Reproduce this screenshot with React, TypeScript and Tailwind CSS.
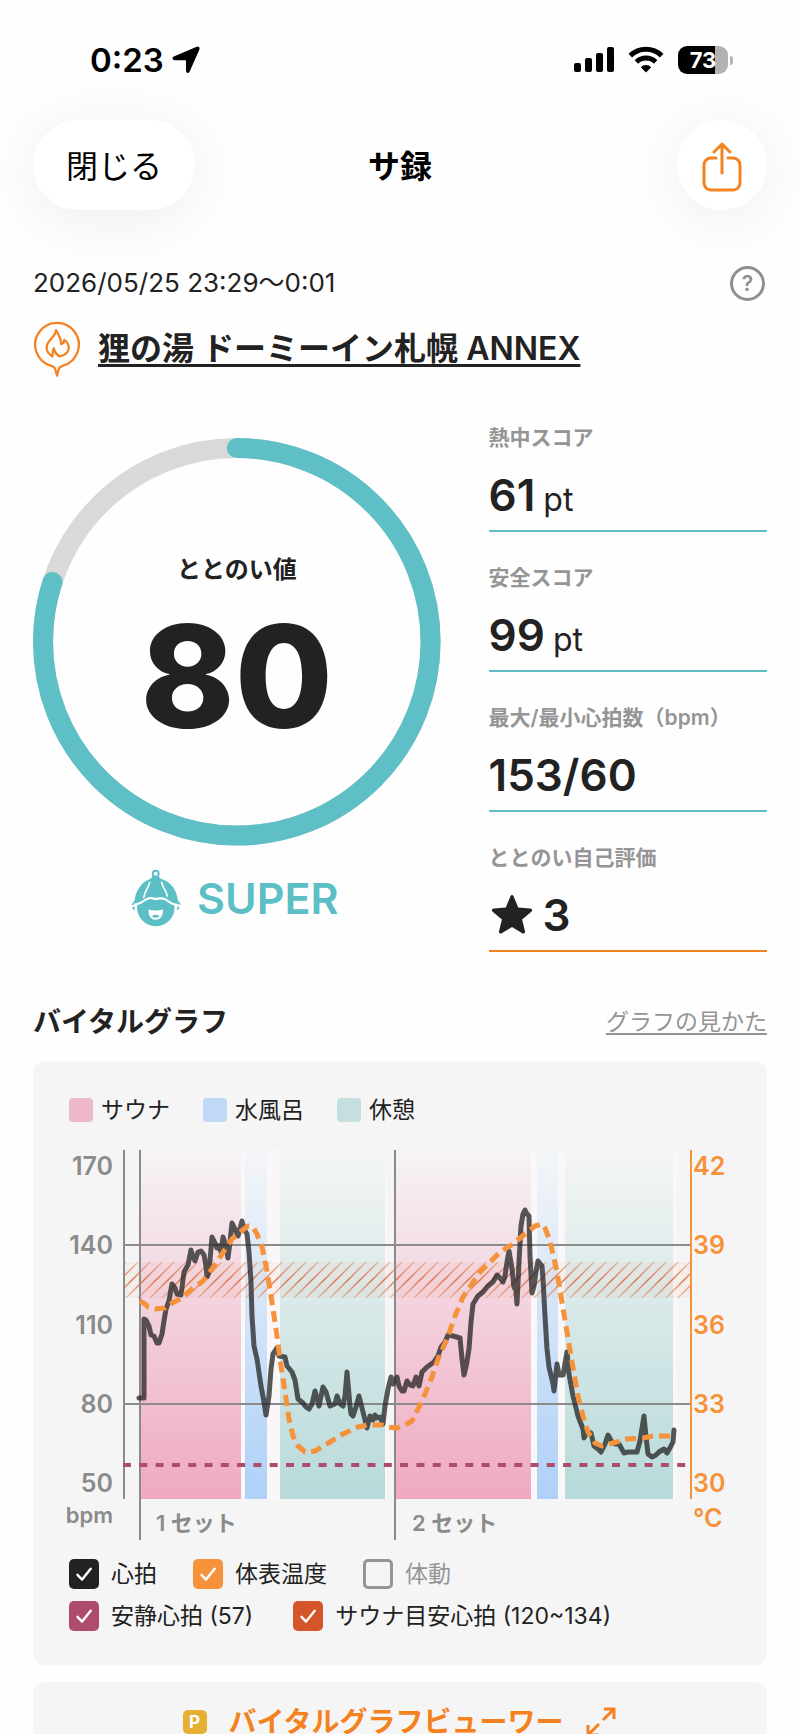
import React, { useState } from 'react';

interface StatProps {
  label: string;
  accent?: string;
  children: React.ReactNode;
}

interface SeriesToggleProps {
  label: string;
  checked: boolean;
  color: string;
  onChange: () => void;
}

const PHASES = [
  { label: 'サウナ', swatch: 'bg-[#efb9cd]' },
  { label: '水風呂', swatch: 'bg-[#bfd9f6]' },
  { label: '休憩', swatch: 'bg-[#c5dfdf]' },
];

const BANDS = [
  { x: 72, width: 100, fill: 'url(#sauna)' },
  { x: 176, width: 22, fill: 'url(#water)' },
  { x: 211, width: 105, fill: 'url(#rest)' },
  { x: 327, width: 135, fill: 'url(#sauna)' },
  { x: 468, width: 21, fill: 'url(#water)' },
  { x: 496, width: 108, fill: 'url(#rest)' },
];

const AXIS = [
  { y: 30, bpm: 170, temp: 42 },
  { y: 109, bpm: 140, temp: 39 },
  { y: 189, bpm: 110, temp: 36 },
  { y: 268, bpm: 80, temp: 33 },
  { y: 347, bpm: 50, temp: 30 },
];

const HEART_RATE =
  '70,253 75,253 75,174 77,175 80,181 82,190 85,191 88,198 90,198 93,189 95,176 97,164 100,156 103,139 106,143 108,149 112,150 115,127 119,120 122,105 124,112 126,116 129,107 132,106 135,110 137,121 138,132 140,127 142,104 143,92 146,98 148,103 150,101 152,107 154,92 157,101 159,113 161,97 163,78 166,84 169,91 171,84 173,76 175,84 178,89 180,107 182,137 183,171 185,201 188,214 192,241 195,257 197,270 200,251 202,224 204,209 208,203 210,211 216,212 218,221 223,227 226,235 229,254 234,258 237,262 240,264 243,259 246,246 250,261 254,242 257,247 261,261 266,259 268,251 271,259 274,261 276,251 278,227 281,261 282,269 284,271 287,262 290,251 294,267 298,283 301,271 304,275 306,270 308,273 311,272 314,279 316,261 319,244 322,232 324,239 328,232 330,241 333,246 335,246 338,236 341,240 344,241 347,232 350,241 353,227 358,222 365,217 369,211 372,202 376,197 379,190 384,191 391,193 393,214 395,230 397,222 400,204 402,177 404,159 409,151 414,147 419,141 424,137 428,130 431,133 434,137 436,131 438,117 440,106 443,124 445,142 447,146 448,159 450,117 452,81 454,69 456,65 458,69 460,71 461,111 463,148 465,141 467,126 469,116 473,121 474,134 476,171 478,204 480,222 484,239 485,246 488,219 490,230 494,230 498,207 500,229 504,251 509,271 514,284 515,293 518,287 522,288 525,301 529,304 532,307 536,299 539,290 543,297 546,299 550,299 555,308 559,307 568,307 571,296 575,271 577,292 579,309 583,312 587,310 590,307 595,304 598,308 602,301 604,297 605,285';

const SKIN_TEMP =
  '71,156 76,159 79,162 86,164 96,163 103,158 111,154 123,144 134,136 143,124 153,109 163,94 171,87 179,81 184,82 188,89 193,102 198,126 203,157 208,191 211,214 216,247 220,274 224,291 229,301 236,307 246,306 261,297 274,289 289,282 299,280 313,280 318,282 328,283 336,280 343,276 349,264 356,249 363,232 369,214 378,194 386,171 394,152 403,139 411,127 421,117 431,107 444,99 456,89 466,81 473,79 476,83 481,96 488,127 493,157 498,187 503,217 509,251 514,271 519,287 526,298 533,301 544,298 558,294 574,293 584,291 604,291';

const StatusBar = () => (
  <div className="flex h-[120px] items-center justify-between pr-[67px] pl-[90px] text-black">
    <div className="flex items-center gap-2">
      <span className="text-[33px] leading-10 font-semibold">0:23</span>
      <svg className="h-7 w-7" viewBox="0 0 28 28" fill="currentColor" stroke="currentColor" strokeWidth="1.5" strokeLinejoin="round" aria-hidden="true">
        <path d="M25 1.500c1.200-.6 2.200.4 1.700 1.600L17 25.300c-.6 1.400-2.200 1.100-2.200-.5v-10.100c0-.8-.4-1.200-1.200-1.200H2.700c-1.600 0-2-1.600-.6-2.300z" />
      </svg>
    </div>
    <div className="flex items-center gap-[14px]">
      <svg className="h-7 w-10" viewBox="0 0 40 28" fill="currentColor" aria-hidden="true">
        <rect x="0" y="17" width="7" height="9" rx="2" />
        <rect x="11" y="12" width="7" height="14" rx="2" />
        <rect x="22" y="7" width="7" height="19" rx="2" />
        <rect x="33" y="1" width="7" height="25" rx="2" />
      </svg>
      <svg className="h-7 w-9" viewBox="0 0 36 28" fill="none" aria-hidden="true">
        <path d="M2.3 9.6a22.5 22.5 0 0 1 31.4 0" stroke="currentColor" strokeWidth="5" />
        <path d="M8.4 16a13.7 13.7 0 0 1 19.2 0" stroke="currentColor" strokeWidth="5" />
        <path d="M18 26.4l-5.2-5.2a7.5 7.5 0 0 1 10.4 0z" fill="currentColor" />
      </svg>
      <div className="flex items-center gap-[2px]">
        <div className="flex h-7 w-[50px] items-center justify-center rounded-[9px] bg-linear-to-r from-black from-74% to-[#b2b2b2] to-74%">
          <span className="text-[22px] leading-7 font-bold text-white">73</span>
        </div>
        <div className="h-[9px] w-[3px] rounded-r-full bg-[#b2b2b2]" />
      </div>
    </div>
  </div>
);

const FacilityPin = () => (
  <svg
    className="h-14 w-12 shrink-0"
    viewBox="38 26 146 172"
    fill="none"
    stroke="#f58220"
    strokeWidth="7"
    strokeLinejoin="round"
    strokeLinecap="round"
    aria-hidden="true"
  >
    <path d="M92 163a67 67 0 1 1 38 0c-7 2-11 4-13 9l-6 22-6-22c-2-5-6-7-13-9z" />
    <path d="M108 54c-1 22-28 30-29 53 0 13 7 22 18 28 0-9 0-17 4-25 3 12 9 20 18 25 17-3 29-14 28-29-1-10-6-17-14-22 1 6-3 11-9 13 0-18-7-25-16-43z" />
  </svg>
);

const Mascot = () => (
  <svg className="h-[58px] w-[50px]" viewBox="35 25 152 174" aria-hidden="true">
    <circle cx="110" cy="38" r="9" fill="none" stroke="#5cbfc6" strokeWidth="6" />
    <path d="M100 46h20c2 6 5 8 12 10 25 9 42 32 45 62l10 14c-24 0-32-5-44-14-12-8-25-5-34-5s-22-3-34 5c-12 9-18 15-39 15l10-14c3-28 20-53 43-63 6-3 9-4 11-10z" fill="#5cbfc6" />
    <path d="M54 133c13-3 20-10 29-15 15-7 22 1 27 1s14-8 30 0c10 5 15 11 27 15a57 57 0 1 1-113-1z" fill="#5cbfc6" />
    <path d="M92 64c-3 18-15 24-18 46M128 64c3 18 15 24 17 42" fill="none" stroke="#fff" strokeWidth="5" strokeLinecap="round" />
    <path d="M44 132c15-1 22-5 37-16 15-8 23-2 29-2s16-5 30 2c15 11 20 16 37 17" fill="none" stroke="#fff" strokeWidth="6" />
    <path d="M88 147c14 4 29 4 44 0 1 18-6 31-22 31s-22-13-22-31z" fill="#fff" />
    <path d="M99 169c2-8 20-8 22 0-7 4-15 4-22 0z" fill="#5cbfc6" />
    <path d="M42 140l2 6M179 140l-2 6" stroke="#5cbfc6" strokeWidth="5" strokeLinecap="round" />
  </svg>
);

const ScoreRing = ({ score }: { score: number }) => (
  <div className="relative">
    <svg className="block w-full" viewBox="0 0 407 407" fill="none" strokeWidth="20">
      <circle cx="203.5" cy="203.5" r="193.5" stroke="#d9d9d9" />
      <circle
        cx="203.5"
        cy="203.5"
        r="193.5"
        stroke="#5ebfc6"
        strokeLinecap="round"
        pathLength="100"
        strokeDasharray={`${score} 100`}
        transform="rotate(-90 203.5 203.5)"
      />
    </svg>
    <div className="absolute inset-0 flex flex-col items-center pt-[114px]">
      <p className="text-2xl leading-9 font-semibold">ととのい値</p>
      <p className="mt-2 text-[142px] leading-[160px] font-extrabold">{score}</p>
    </div>
  </div>
);

const Stat = ({ label, accent = 'border-[#5ebfc6]', children }: StatProps) => (
  <div className={`border-b-2 ${accent}`}>
    <dt className="text-[21px] leading-7 font-semibold text-[#959595]">{label}</dt>
    <dd className="mt-2 flex h-[70px] items-baseline gap-2 text-[44px] leading-[70px] font-semibold">{children}</dd>
  </div>
);

const VitalChart = ({ visible }: { visible: Record<string, boolean> }) => (
  <svg className="mt-[22px] block w-full overflow-visible" viewBox="0 0 662 400" role="img" aria-label="バイタルグラフ">
    <defs>
      <linearGradient id="sauna" x1="0" y1="0" x2="0" y2="1">
        <stop offset="0" stopColor="#f6f4f5" />
        <stop offset="1" stopColor="#efa9c1" />
      </linearGradient>
      <linearGradient id="water" x1="0" y1="0" x2="0" y2="1">
        <stop offset="0" stopColor="#f4f6f8" />
        <stop offset="1" stopColor="#aed0f8" />
      </linearGradient>
      <linearGradient id="rest" x1="0" y1="0" x2="0" y2="1">
        <stop offset="0" stopColor="#f4f5f5" />
        <stop offset="1" stopColor="#b8dada" />
      </linearGradient>
      <linearGradient id="hatch" gradientUnits="userSpaceOnUse" x1="0" y1="117" x2="0" y2="153">
        <stop offset="0" stopColor="#e0805c" stopOpacity="0.4" />
        <stop offset="0.5" stopColor="#dd6a40" stopOpacity="0.9" />
        <stop offset="1" stopColor="#e0805c" stopOpacity="0.4" />
      </linearGradient>
      <clipPath id="target">
        <rect x="55" y="117" width="567" height="36" />
      </clipPath>
    </defs>

    <rect x="72" y="5" width="246" height="349" fill="#f9f7f7" />
    <rect x="327" y="5" width="281" height="349" fill="#f9f7f7" />
    {BANDS.map((band) => (
      <rect key={band.x} x={band.x} y="5" width={band.width} height="349" fill={band.fill} />
    ))}

    {visible.target && (
      <g clipPath="url(#target)">
        <rect x="55" y="117" width="567" height="36" fill="#e8703a" fillOpacity="0.05" />
        {Array.from({ length: 52 }, (_, i) => (
          <line key={i} x1={20 + i * 12} y1="154" x2={58 + i * 12} y2="116" stroke="url(#hatch)" strokeWidth="1.5" />
        ))}
      </g>
    )}

    <g stroke="#8b8b8b" strokeWidth="2">
      <path d="M55 100H622M55 259H622" />
      <path d="M55 5V354M71 5V395M326 5V395" />
    </g>
    <path d="M622 5V354" stroke="#f5923a" strokeWidth="2" />

    {visible.resting && (
      <path d="M54 320H618" stroke="#ad4d6b" strokeWidth="4" strokeDasharray="8 8.300" />
    )}
    {visible.heart && (
      <polyline
        points={HEART_RATE}
        fill="none"
        stroke="#222"
        strokeOpacity="0.75"
        strokeWidth="5"
        strokeLinejoin="round"
        strokeLinecap="round"
      />
    )}
    {visible.temp && (
      <polyline
        points={SKIN_TEMP}
        fill="none"
        stroke="#f5923a"
        strokeWidth="5"
        strokeLinejoin="round"
        strokeDasharray="11 6"
      />
    )}

    {AXIS.map((tick) => (
      <g key={tick.bpm} className="text-[25px] font-semibold">
        <text x="44" y={tick.y} textAnchor="end" fill="#8b8b8b">{tick.bpm}</text>
        <text x="624" y={tick.y} fill="#f5923a">{tick.temp}</text>
      </g>
    ))}
    <g className="text-[22px] font-semibold" fill="#8b8b8b">
      <text x="44" y="378" textAnchor="end">bpm</text>
      <text x="87" y="386">1 セット</text>
      <text x="343" y="386">2 セット</text>
    </g>
    <text className="text-[25px] font-semibold" x="624" y="382" fill="#f5923a">°C</text>
  </svg>
);

const SeriesToggle = ({ label, checked, color, onChange }: SeriesToggleProps) => (
  <label className={`flex items-center gap-3 text-[23px] leading-[30px] ${checked ? '' : 'text-[#959595]'}`}>
    <span className="relative h-[30px] w-[30px]">
      <input
        type="checkbox"
        checked={checked}
        onChange={onChange}
        className={`block h-[30px] w-[30px] appearance-none rounded-[5px] border-[#959595] ${checked ? color : 'border-3'}`}
      />
      {checked && (
        <svg className="pointer-events-none absolute inset-0" viewBox="0 0 30 30" fill="none" stroke="#fff" strokeWidth="2.400" strokeLinecap="round" strokeLinejoin="round">
          <path d="M8.500 15.800l4.600 4.800 8.600-10.800" />
        </svg>
      )}
    </span>
    {label}
  </label>
);

export default function App() {
  const [visible, setVisible] = useState<Record<string, boolean>>({
    heart: true,
    temp: true,
    motion: false,
    resting: true,
    target: true,
  });

  const toggle = (key: string) => setVisible((prev) => ({ ...prev, [key]: !prev[key] }));

  return (
    <div className="h-screen overflow-y-auto bg-[#fefefe] font-['Inter','Noto_Sans_CJK_JP',sans-serif] text-[#222] [scrollbar-width:none]">
      <StatusBar />

      {/* Navigation */}
      <header className="grid grid-cols-3 items-center px-[33px] text-black">
        <button className="h-[90px] w-[162px] rounded-full bg-white pt-1 text-[32px] shadow-[0_8px_64px_rgba(0,0,0,0.07)]">
          閉じる
        </button>
        <h1 className="pt-1 text-center text-[32px] leading-10 font-semibold">サ録</h1>
        <button
          aria-label="共有"
          className="flex h-[90px] w-[90px] items-center justify-center justify-self-end rounded-full bg-white shadow-[0_8px_64px_rgba(0,0,0,0.07)]"
        >
          <svg className="mt-1 h-[50px] w-10" viewBox="0 0 40 50" fill="none" stroke="#f58220" strokeWidth="3" strokeLinecap="round" strokeLinejoin="round">
            <path d="M14 16H9a7 7 0 0 0-7 7v18a7 7 0 0 0 7 7h22a7 7 0 0 0 7-7V23a7 7 0 0 0-7-7h-5" />
            <path d="M20 31V2M12 10l8-8 8 8" />
          </svg>
        </button>
      </header>

      <main className="px-[33px] pt-[55px]">
        <div className="flex h-9 items-center justify-between pr-[2px]">
          <p className="text-[26px] leading-9">2026/05/25 23:29〜0:01</p>
          <button
            aria-label="ヘルプ"
            className="flex h-[35px] w-[35px] items-center justify-center rounded-full border-3 border-[#8f8f8f] text-[21px] leading-none font-semibold text-[#8f8f8f]"
          >
            ?
          </button>
        </div>

        <div className="mt-5 flex items-center gap-[17px]">
          <FacilityPin />
          <a href="#facility" className="text-[32px] leading-[56px] font-semibold underline decoration-3 underline-offset-4">
            狸の湯 ドーミーイン札幌 ANNEX
          </a>
        </div>

        <section className="mt-[47px] grid grid-cols-[407fr_278fr] gap-12">
          <div className="pt-[14px]">
            <ScoreRing score={80} />
            <div className="mt-[23px] flex items-center justify-center gap-4 pr-1 text-[#5cbfc6]">
              <Mascot />
              <span className="text-[43px] leading-[58px] font-semibold">SUPER</span>
            </div>
          </div>

          <dl className="flex flex-col gap-8">
            <Stat label="熱中スコア">
              61 <span className="text-[32px] leading-none font-normal">pt</span>
            </Stat>
            <Stat label="安全スコア">
              99 <span className="text-[32px] leading-none font-normal">pt</span>
            </Stat>
            <Stat label="最大/最小心拍数（bpm）">153/60</Stat>
            <Stat label="ととのい自己評価" accent="border-[#f58220]">
              <svg className="h-[42px] w-[46px] self-center" viewBox="0 0 46 42" fill="#222" aria-hidden="true">
                <path d="M21.400 2.300c.7-1.700 2.500-1.700 3.200 0l4.600 11.200 12.100.9c1.800.2 2.400 2.100 1 3.300l-9.200 7.900 2.900 11.700c.4 1.800-1.200 2.900-2.700 2L23 33l-10.300 6.300c-1.500.9-3.100-.2-2.700-2l2.900-11.700-9.200-7.900c-1.400-1.200-.8-3.100 1-3.300l12.100-.9z" />
              </svg>
              3
            </Stat>
          </dl>
        </section>

        <div className="mt-12 flex h-11 items-center justify-between">
          <h2 className="text-[28px] leading-11 font-bold">バイタルグラフ</h2>
          <a href="#guide" className="text-[23px] leading-9 text-[#959595] underline underline-offset-3">
            グラフの見かた
          </a>
        </div>

        <section className="mt-[17px] rounded-xl bg-[#f5f5f5] px-9 pt-9 pb-[34px]">
          <ul className="flex gap-[33px]">
            {PHASES.map((phase) => (
              <li key={phase.label} className="flex items-center gap-2 text-[23px] leading-[26px]">
                <span className={`h-6 w-6 rounded-[4px] ${phase.swatch}`} />
                {phase.label}
              </li>
            ))}
          </ul>

          <VitalChart visible={visible} />

          <div className="mt-[14px] flex flex-col gap-3">
            <div className="flex gap-9">
              <SeriesToggle label="心拍" checked={visible.heart} color="bg-[#222]" onChange={() => toggle('heart')} />
              <SeriesToggle label="体表温度" checked={visible.temp} color="bg-[#f5923a]" onChange={() => toggle('temp')} />
              <SeriesToggle label="体動" checked={visible.motion} color="bg-[#8b8b8b]" onChange={() => toggle('motion')} />
            </div>
            <div className="flex gap-10">
              <SeriesToggle label="安静心拍 (57)" checked={visible.resting} color="bg-[#ad4d6b]" onChange={() => toggle('resting')} />
              <SeriesToggle label="サウナ目安心拍 (120~134)" checked={visible.target} color="bg-[#d4552a]" onChange={() => toggle('target')} />
            </div>
          </div>
        </section>

        <button className="mt-[17px] flex h-20 w-full items-center justify-center gap-[22px] rounded-xl bg-[#f5f5f5] text-[28px] leading-6 font-bold text-[#f58220]">
          <span className="h-6 w-6 rounded-[5px] bg-[#e6b034] text-[17px] leading-6 text-white">P</span>
          バイタルグラフビューワー
          <svg className="h-8 w-8" viewBox="0 0 32 32" fill="none" stroke="currentColor" strokeWidth="3" aria-hidden="true">
            <path d="M19 3h10v10M29 3L18 14M3 19v10h10M3 29l11-11" />
          </svg>
        </button>
      </main>
    </div>
  );
}
